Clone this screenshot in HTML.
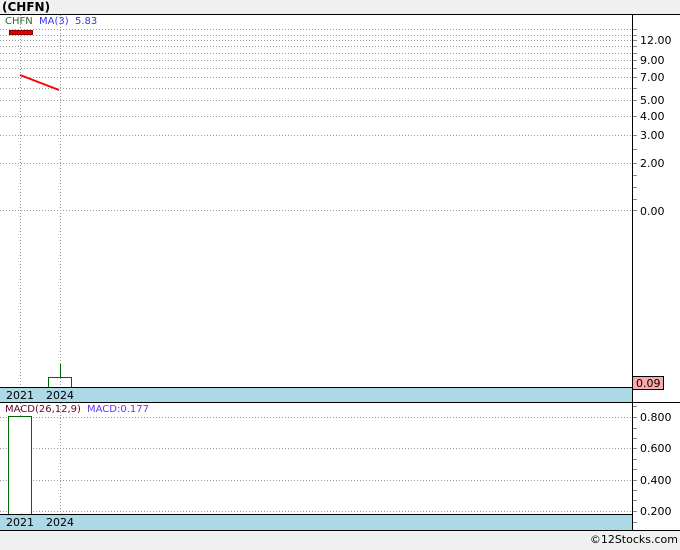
<!DOCTYPE html><html><head><style>body{margin:0;background:#f0f0f0;width:680px;height:546px;overflow:hidden;font-family:Tahoma,"DejaVu Sans",sans-serif}</style></head><body>
<svg width="680" height="546" xmlns="http://www.w3.org/2000/svg" font-family="'DejaVu Sans',sans-serif">
<rect x="0" y="0" width="680" height="546" fill="#f0f0f0"/>
<text x="2" y="11" font-size="12" font-weight="bold" fill="#000">(CHFN)</text>
<rect x="0" y="14" width="680" height="517" fill="#fff"/>
<line x1="0" y1="14.5" x2="680" y2="14.5" stroke="#000"/>
<g stroke="#999" stroke-dasharray="1,2">
<line x1="0" y1="29.5" x2="632" y2="29.5"/><line x1="0" y1="35.5" x2="632" y2="35.5"/><line x1="0" y1="40.5" x2="632" y2="40.5"/><line x1="0" y1="46.5" x2="632" y2="46.5"/><line x1="0" y1="53.5" x2="632" y2="53.5"/><line x1="0" y1="60.5" x2="632" y2="60.5"/><line x1="0" y1="68.5" x2="632" y2="68.5"/><line x1="0" y1="77.5" x2="632" y2="77.5"/><line x1="0" y1="88.5" x2="632" y2="88.5"/><line x1="0" y1="100.5" x2="632" y2="100.5"/><line x1="0" y1="116.5" x2="632" y2="116.5"/><line x1="0" y1="135.5" x2="632" y2="135.5"/><line x1="0" y1="163.5" x2="632" y2="163.5"/><line x1="0" y1="210.5" x2="632" y2="210.5"/>
<line x1="20.5" y1="15" x2="20.5" y2="387"/><line x1="60.5" y1="15" x2="60.5" y2="387"/>
<line x1="0" y1="417.5" x2="632" y2="417.5"/><line x1="0" y1="448.5" x2="632" y2="448.5"/><line x1="0" y1="480.5" x2="632" y2="480.5"/><line x1="0" y1="511.5" x2="632" y2="511.5"/>
<line x1="20.5" y1="403" x2="20.5" y2="514"/><line x1="60.5" y1="403" x2="60.5" y2="514"/>
</g>
<g stroke="#888">
<line x1="632" y1="29.5" x2="637" y2="29.5"/><line x1="632" y1="35.5" x2="637" y2="35.5"/><line x1="632" y1="40.5" x2="637" y2="40.5"/><line x1="632" y1="46.5" x2="637" y2="46.5"/><line x1="632" y1="53.5" x2="637" y2="53.5"/><line x1="632" y1="60.5" x2="637" y2="60.5"/><line x1="632" y1="68.5" x2="637" y2="68.5"/><line x1="632" y1="77.5" x2="637" y2="77.5"/><line x1="632" y1="88.5" x2="637" y2="88.5"/><line x1="632" y1="100.5" x2="637" y2="100.5"/><line x1="632" y1="116.5" x2="637" y2="116.5"/><line x1="632" y1="135.5" x2="637" y2="135.5"/><line x1="632" y1="149.5" x2="637" y2="149.5"/><line x1="632" y1="163.5" x2="637" y2="163.5"/><line x1="632" y1="175.5" x2="637" y2="175.5"/><line x1="632" y1="187.5" x2="637" y2="187.5"/><line x1="632" y1="199.5" x2="637" y2="199.5"/><line x1="632" y1="210.5" x2="637" y2="210.5"/>
<line x1="632" y1="406.5" x2="637" y2="406.5"/><line x1="632" y1="417.5" x2="637" y2="417.5"/><line x1="632" y1="428.5" x2="637" y2="428.5"/><line x1="632" y1="438.5" x2="637" y2="438.5"/><line x1="632" y1="448.5" x2="637" y2="448.5"/><line x1="632" y1="459.5" x2="637" y2="459.5"/><line x1="632" y1="469.5" x2="637" y2="469.5"/><line x1="632" y1="480.5" x2="637" y2="480.5"/><line x1="632" y1="490.5" x2="637" y2="490.5"/><line x1="632" y1="500.5" x2="637" y2="500.5"/><line x1="632" y1="511.5" x2="637" y2="511.5"/><line x1="632" y1="522.5" x2="637" y2="522.5"/>
</g>
<g font-size="11" fill="#000">
<text x="640" y="44">12.00</text><text x="640" y="64">9.00</text><text x="640" y="81">7.00</text><text x="640" y="104">5.00</text><text x="640" y="120">4.00</text><text x="640" y="139">3.00</text><text x="640" y="167">2.00</text><text x="640" y="215">0.00</text>
<text x="640" y="421">0.800</text><text x="640" y="452">0.600</text><text x="640" y="484">0.400</text><text x="640" y="515">0.200</text>
</g>
<text x="5" y="24" font-size="10" fill="#336633">CHFN</text>
<text x="39" y="24" font-size="10" fill="#3333ff">MA(3)</text>
<text x="75" y="24" font-size="10" fill="#3333ff">5.83</text>
<rect x="9.5" y="30.5" width="23" height="4" fill="#dd0000" stroke="#880000"/>
<line x1="20" y1="75" x2="59" y2="90" stroke="#ff0000" stroke-width="2"/>
<path d="M60.5 364V377.5M48.5 387V377.5H71.5V387" stroke="#006600" fill="none"/>
<rect x="0" y="387" width="632" height="15" fill="#add8e6"/>
<line x1="0" y1="387.5" x2="632" y2="387.5" stroke="#000"/>
<line x1="0" y1="402.5" x2="680" y2="402.5" stroke="#000"/>
<text x="6" y="399" font-size="11" fill="#000">2021</text><text x="46" y="399" font-size="11" fill="#000">2024</text>
<rect x="632.5" y="376.5" width="31" height="13" fill="#f9aaaa" stroke="#000"/>
<text x="636" y="387" font-size="11" fill="#000">0.09</text>
<text x="5" y="412" font-size="10" fill="#660033">MACD(26,12,9)</text>
<text x="87" y="412" font-size="10" fill="#6633ff">MACD:0.177</text>
<rect x="8.5" y="416.5" width="23" height="98" fill="#fff" stroke="#006600"/>
<rect x="0" y="514" width="632" height="16" fill="#add8e6"/>
<line x1="0" y1="514.5" x2="632" y2="514.5" stroke="#000"/>
<line x1="0" y1="530.5" x2="680" y2="530.5" stroke="#000"/>
<text x="6" y="526" font-size="11" fill="#000">2021</text><text x="46" y="526" font-size="11" fill="#000">2024</text>
<line x1="632.5" y1="14" x2="632.5" y2="531" stroke="#000"/>
<rect x="0" y="531" width="680" height="15" fill="#f0f0f0"/>
<text x="678" y="543" font-size="11" fill="#000" text-anchor="end">©12Stocks.com</text>
</svg></body></html>
